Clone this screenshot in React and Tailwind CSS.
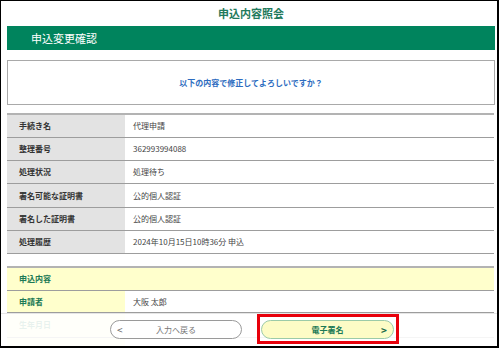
const font = { fontFamily: '"Noto Sans CJK JP", "Noto Sans", sans-serif' }

const rows = [
  { label: '手続き名', value: '代理申請', h: 'h-[23px]' },
  { label: '整理番号', value: '362993994088', h: 'h-[23px]' },
  { label: '処理状況', value: '処理待ち', h: 'h-[23px]' },
  { label: '署名可能な証明書', value: '公的個人認証', h: 'h-[24px]' },
  { label: '署名した証明書', value: '公的個人認証', h: 'h-[23px]' },
  { label: '処理履歴', value: '2024年10月15日10時36分 申込', h: 'h-[23px]' },
]

function Row({ label, value, h }) {
  return (
    <div className={`flex ${h} border-b border-[#9d9d9d]`}>
      <div className="w-[118px] shrink-0 bg-[#e3e3e3] pl-[12px] flex items-center text-[8px] font-bold text-[#333]">
        {label}
      </div>
      <div className="flex-1 pl-[8px] flex items-center text-[8px] text-[#444]">{value}</div>
    </div>
  )
}

export default function App() {
  return (
    <div
      style={font}
      className="relative w-[499px] h-[348px] overflow-hidden bg-white border-l border-t border-r-2 border-b-2 border-black"
    >
      <div className="pl-[6px] pr-[2px]">
        {/* Title */}
        <div className="h-[25px] flex items-center justify-center text-[11px] font-bold text-[#1f7a5c]">
          申込内容照会
        </div>

        {/* Green header */}
        <div className="h-[24px] bg-[#00845d] flex items-center pl-[24px] text-[11px] text-white">
          申込変更確認
        </div>

        {/* Message */}
        <div className="mt-[10px] h-[45px] border border-[#a9a9a9] flex items-center justify-center text-[8px] font-bold text-[#2d6cc0]">
          以下の内容で修正してよろしいですか？
        </div>

        {/* Detail table */}
        <div className="mt-[8px] border-t-2 border-[#b3b3b3] mr-[1px]">
          {rows.map(r => (
            <Row key={r.label} {...r} />
          ))}
        </div>

        {/* Application content */}
        <div className="mt-[12px] border-t-2 border-[#b3b3b3] mr-[1px]">
          <div className="h-[23px] bg-[#ffffcc] border-b border-[#9d9d9d] pl-[12px] flex items-center text-[8px] font-bold text-[#1c7a55]">
            申込内容
          </div>
          <div className="flex h-[22px] border-b border-[#9d9d9d]">
            <div className="w-[118px] shrink-0 bg-[#ffffcc] pl-[12px] flex items-center text-[8px] font-bold text-[#1c7a55]">
              申請者
            </div>
            <div className="flex-1 pl-[8px] flex items-center text-[8px] text-[#444]">大阪 太郎</div>
          </div>
          <div className="flex h-[25px] border-b border-[#9d9d9d]">
            <div className="w-[118px] shrink-0 bg-[#ffffcc] pl-[12px] flex items-center text-[8px] font-bold text-[#1c7a55]">
              生年月日
            </div>
            <div className="flex-1 pl-[8px] flex items-center text-[8px] text-[#444]"></div>
          </div>
          <div className="flex h-[25px]">
            <div className="w-[118px] shrink-0 bg-[#ffffcc]"></div>
          </div>
        </div>
      </div>

      {/* Floating footer */}
      <div className="absolute left-0 right-0 top-[312px] bottom-0 bg-white/90 border-t border-[#e6e6e6]">
        <div className="flex items-start pl-[109px] pt-[6px] gap-[19px]">
          <button className="relative w-[132px] h-[19px] rounded-full border border-[#9a9a9a] bg-white flex items-center text-[8px] text-[#777]">
            <span className="absolute left-[6px] text-[10px] leading-none text-[#666]">&lt;</span>
            <span className="w-full text-center">入力へ戻る</span>
          </button>
          <div className="relative">
            <button className="relative w-[133px] h-[19px] rounded-full border border-[#9ccba8] bg-[#fdfcc6] flex items-center text-[8px] font-bold text-[#1c7a55]">
              <span className="w-full text-center">電子署名</span>
              <span className="absolute right-[6px] text-[10px] leading-none font-bold text-[#1c6a4a]">&gt;</span>
            </button>
            <div className="absolute -left-[4px] -right-[5px] -top-[6px] -bottom-[5px] border-[3px] border-[#e8000b]"></div>
          </div>
        </div>
      </div>
    </div>
  )
}
